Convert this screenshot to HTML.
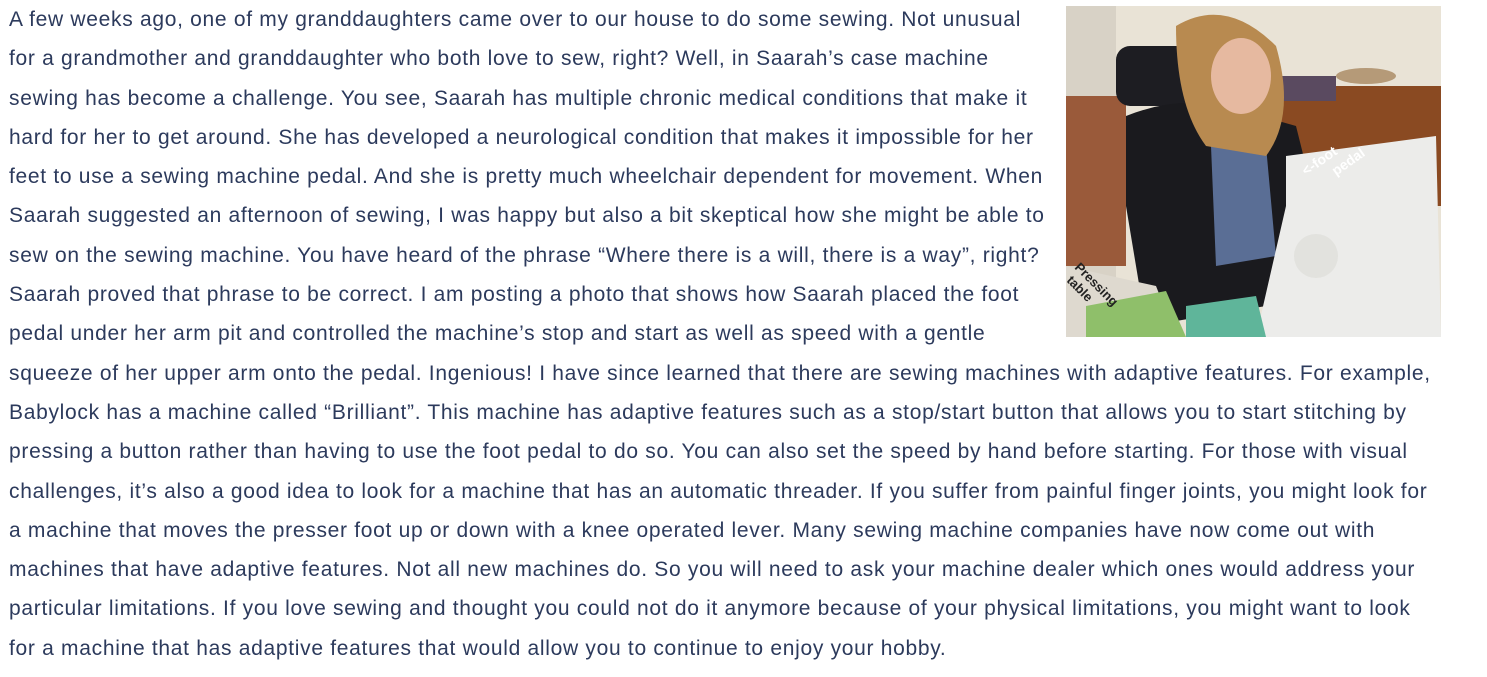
<!DOCTYPE html>
<html><head><style>
html,body{margin:0;padding:0;background:#fff;width:1487px;height:677px;overflow:hidden}
.t{position:absolute;left:9px;top:0;font-family:"Liberation Sans",sans-serif;font-size:21px;letter-spacing:0.7px;color:#2c3a5c;line-height:39.3px;white-space:nowrap}
.t div{height:39.3px}
svg{position:absolute;left:1066px;top:6px}
</style></head><body>
<div class="t">
<div>A few weeks ago, one of my granddaughters came over to our house to do some sewing. Not unusual</div>
<div>for a grandmother and granddaughter who both love to sew, right? Well, in Saarah’s case machine</div>
<div>sewing has become a challenge. You see, Saarah has multiple chronic medical conditions that make it</div>
<div>hard for her to get around. She has developed a neurological condition that makes it impossible for her</div>
<div>feet to use a sewing machine pedal. And she is pretty much wheelchair dependent for movement. When</div>
<div>Saarah suggested an afternoon of sewing, I was happy but also a bit skeptical how she might be able to</div>
<div>sew on the sewing machine. You have heard of the phrase “Where there is a will, there is a way”, right?</div>
<div>Saarah proved that phrase to be correct. I am posting a photo that shows how Saarah placed the foot</div>
<div>pedal under her arm pit and controlled the machine’s stop and start as well as speed with a gentle</div>
<div>squeeze of her upper arm onto the pedal. Ingenious! I have since learned that there are sewing machines with adaptive features. For example,</div>
<div>Babylock has a machine called “Brilliant”. This machine has adaptive features such as a stop/start button that allows you to start stitching by</div>
<div>pressing a button rather than having to use the foot pedal to do so. You can also set the speed by hand before starting. For those with visual</div>
<div>challenges, it’s also a good idea to look for a machine that has an automatic threader. If you suffer from painful finger joints, you might look for</div>
<div>a machine that moves the presser foot up or down with a knee operated lever. Many sewing machine companies have now come out with</div>
<div>machines that have adaptive features. Not all new machines do. So you will need to ask your machine dealer which ones would address your</div>
<div>particular limitations. If you love sewing and thought you could not do it anymore because of your physical limitations, you might want to look</div>
<div>for a machine that has adaptive features that would allow you to continue to enjoy your hobby.</div>
</div>
<svg width="375" height="331" viewBox="0 0 375 331">
<rect width="375" height="331" fill="#e9e3d6"/>
<rect x="0" y="0" width="50" height="331" fill="#d8d2c6"/>
<rect x="210" y="80" width="165" height="120" fill="#8a4a22"/>
<rect x="200" y="70" width="70" height="25" fill="#5a4a60"/>
<ellipse cx="300" cy="70" rx="30" ry="8" fill="#b59a78"/>
<rect x="0" y="90" width="60" height="170" fill="#9a5a3a"/>
<rect x="50" y="40" width="80" height="60" rx="14" fill="#1d1d22"/>
<path d="M60 110 Q110 90 160 100 L230 120 L250 200 L200 300 L80 320 L60 200Z" fill="#1a1a1e"/>
<path d="M145 140 L200 140 L210 250 L150 260Z" fill="#5a6e95"/>
<path d="M110 20 Q160 -10 210 40 Q230 110 200 150 L140 140 Q110 100 110 20Z" fill="#b88a50"/>
<ellipse cx="175" cy="70" rx="30" ry="38" fill="#e6b9a0"/>
<path d="M220 150 L370 130 L375 331 L190 331 L220 200Z" fill="#ececea"/>
<circle cx="250" cy="250" r="22" fill="#e2e2de"/>
<path d="M0 260 L90 280 L110 331 L0 331Z" fill="#ded9cf"/>
<path d="M20 300 L100 285 L120 331 L20 331Z" fill="#8fbf6a"/>
<path d="M120 300 L190 290 L200 331 L120 331Z" fill="#5fb59a"/>
<text x="240" y="170" fill="#fff" font-family="Liberation Sans" font-weight="bold" font-size="14" transform="rotate(-35 240 170)">&lt;-foot</text>
<text x="270" y="170" fill="#fff" font-family="Liberation Sans" font-weight="bold" font-size="14" transform="rotate(-35 270 170)">pedal</text>
<text x="8" y="262" fill="#222" font-family="Liberation Sans" font-weight="bold" font-size="13" transform="rotate(45 8 262)">Pressing</text>
<text x="0" y="275" fill="#222" font-family="Liberation Sans" font-weight="bold" font-size="13" transform="rotate(45 0 275)">table</text>
</svg>
</body></html>
